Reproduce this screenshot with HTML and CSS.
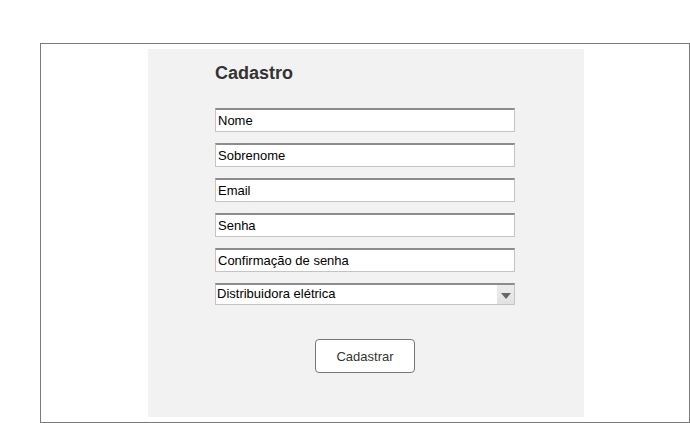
FILE: index.html
```html
<!DOCTYPE html>
<html lang="pt">
<head>
<meta charset="utf-8">
<title>Cadastro</title>
<link rel="stylesheet" href="styles.css">
</head>
<body>
<div class="frame">
  <div class="panel">
    <h1 class="title">Cadastro</h1>
    <div class="fields">
      <div class="field">Nome</div>
      <div class="field">Sobrenome</div>
      <div class="field">Email</div>
      <div class="field">Senha</div>
      <div class="field">Confirmação de senha</div>
      <div class="select">
        <span class="select-text">Distribuidora elétrica</span>
        <span class="select-btn"><span class="tri"></span></span>
      </div>
    </div>
    <div class="actions">
      <button class="btn">Cadastrar</button>
    </div>
  </div>
</div>
</body>
</html>
```
FILE: styles.css
```css
html, body {
  margin: 0;
  padding: 0;
  background: #fff;
  font-family: "Liberation Sans", Arial, sans-serif;
}
.frame {
  margin: 43px 0 0 40px;
  width: 650px;
  height: 380px;
  box-sizing: border-box;
  border: 1px solid #7a7a7a;
  padding: 5px 0 0 107px;
}
.panel {
  width: 436px;
  height: 368px;
  background: #f2f2f2;
  box-sizing: border-box;
  padding: 14px 0 0 67px;
}
.title {
  margin: 0;
  font-size: 18px;
  line-height: 21px;
  font-weight: bold;
  color: #333;
}
.fields {
  margin-top: 24px;
  display: flex;
  flex-direction: column;
  gap: 11px;
  width: 300px;
}
.field {
  height: 24px;
  box-sizing: border-box;
  background: #fff;
  border: 1px solid #c4c4c4;
  border-top: 2px solid #8c8c8c;
  font-size: 13px;
  line-height: 21px;
  padding-left: 2px;
  color: #000;
}
.select {
  height: 22px;
  box-sizing: border-box;
  background: #fff;
  border: 1px solid #c4c4c4;
  border-top: 2px solid #8c8c8c;
  display: flex;
  font-size: 13px;
  line-height: 18px;
  color: #000;
}
.select-text {
  flex: 1;
  padding-left: 1px;
}
.select-btn {
  width: 17px;
  background: linear-gradient(#ececec, #e2e2e2);
  display: flex;
  align-items: center;
  justify-content: center;
}
.tri {
  width: 0;
  height: 0;
  border-left: 5px solid transparent;
  border-right: 5px solid transparent;
  border-top: 6px solid #666;
  margin-top: 2px;
}
.actions {
  width: 300px;
  display: flex;
  justify-content: center;
  margin-top: 34px;
}
.btn {
  width: 100px;
  height: 34px;
  box-sizing: border-box;
  background: #fff;
  border: 1px solid #777;
  border-radius: 4px;
  font-family: "Liberation Sans", Arial, sans-serif;
  font-size: 13px;
  color: #333;
  padding: 0;
}
```
